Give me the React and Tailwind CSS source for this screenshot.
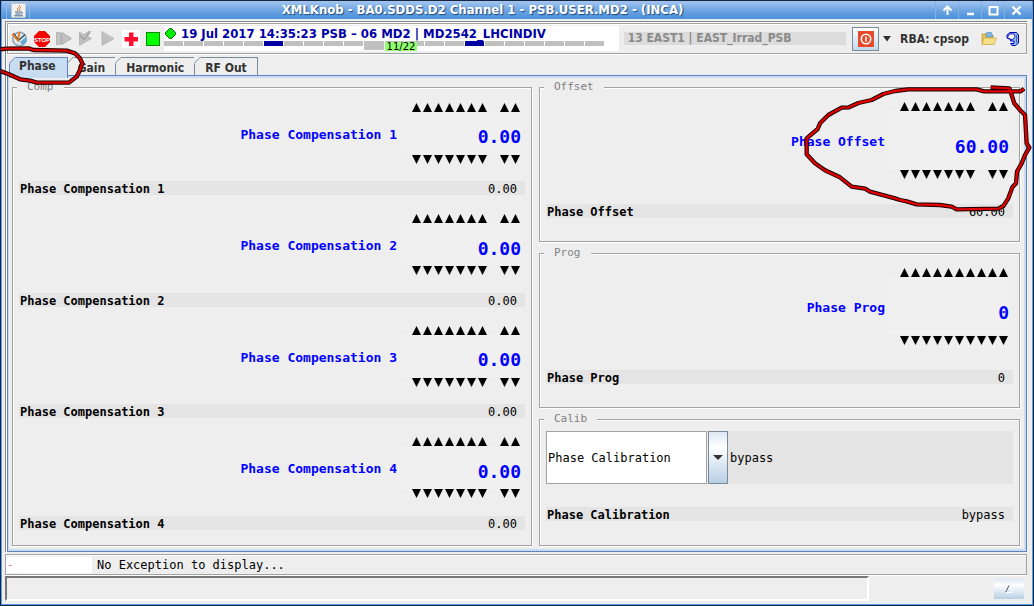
import React from "react";

const SANS = "font-['DejaVu_Sans_Condensed','DejaVu_Sans',sans-serif]";
const MONO = "font-['DejaVu_Sans_Mono',monospace]";

function Steps({ dir, decimals, label }) {
  const places = Array.from({ length: 10 }, (_, i) => i);
  return (
    <div className="grid h-[10px] grid-cols-[repeat(10,11px)] justify-end">
      {places.map((i) =>
        decimals && i === 7 ? (
          <span key={i} />
        ) : (
          <button key={i} type="button" aria-label={`${label} digit ${i + 1} ${dir}`} className="flex h-[10px] w-[11px] items-center justify-center">
            <svg width="9" height="9" viewBox="0 0 9 9">
              <path d={dir === "up" ? "M4.5 0L9 9H0z" : "M0 0H9L4.5 9z"} fill="#000" />
            </svg>
          </button>
        )
      )}
    </div>
  );
}

function Knob({ label, value, decimals = true, tall = false }) {
  return (
    <div className="flex items-center justify-end gap-[3px] pr-[4px]">
      <span className="pt-[3px] text-[13px] leading-4 font-bold text-[#0000ff]">{label}</span>
      <div className="w-[121px]">
        <Steps dir="up" decimals={decimals} label={label} />
        <div
          className={`flex items-center justify-end bg-[#f0f0f0] text-[18px] leading-5 font-bold text-[#0000ff] ${
            tall ? "h-[58px] pt-[14px]" : "h-[42px] pt-[8px]"
          }`}
        >
          {value}
        </div>
        <Steps dir="down" decimals={decimals} label={label} />
      </div>
    </div>
  );
}

function Readout({ label, value }) {
  return (
    <div className="flex h-[14px] items-center justify-between bg-[#e4e4e4] pt-[2px] pr-[8px] pl-px text-[12px] leading-[12px] text-black">
      <span className="font-bold">{label}</span>
      <span>{value}</span>
    </div>
  );
}

function Group({ title, className = "", children }) {
  return (
    <fieldset
      className={`flex min-w-0 flex-col border border-[#a3a3a3] px-[6px] shadow-[1px_1px_0_#fff,inset_1px_1px_0_#fff] ${className}`}
    >
      <legend className="ml-[-2px] h-[12px] bg-[#eeeeee] px-[10px] text-[11px] leading-[12px] text-[#808080]">{title}</legend>
      {children}
    </fieldset>
  );
}

function Tab({ children, selected }) {
  return (
    <button
      type="button"
      role="tab"
      aria-selected={!!selected}
      className={`relative -ml-px border border-b-0 text-[12px] leading-[17px] font-bold text-[#333] ${
        selected
          ? "z-10 h-[21px] border-[#6382bf] bg-[#c8ddf2] pr-[11px] pb-[3px] pl-[9px]"
          : "h-[18px] border-[#7a8a99] bg-[#eeeeee] px-[10px] pt-[2px]"
      }`}
    >
      <svg className="absolute -top-px -left-px" width="7" height="7" viewBox="0 0 7 7">
        <path d="M0 0H7L0 7z" fill="#eeeeee" />
        <path d="M0 6.5L6.5 0" stroke={selected ? "#6382bf" : "#7a8a99"} />
      </svg>
      {children}
    </button>
  );
}

function WinButton({ label, children }) {
  return (
    <button type="button" aria-label={label} className="flex h-[18px] w-[23px] items-center justify-center border-l border-[#7fb0e6]">
      <svg width="13" height="13" viewBox="0 0 13 13" fill="none">
        {children}
      </svg>
    </button>
  );
}

function Tool({ label, className, children }) {
  return (
    <button type="button" aria-label={label} className={`shrink-0 ${className}`}>
      {children}
    </button>
  );
}

function Toolbar() {
  const ticks = Array.from({ length: 22 }, (_, i) => i);
  return (
    <div className={`flex h-[31px] items-center border border-[#a3a3a3] pr-[7px] pl-[3px] shadow-[inset_1px_1px_0_#fff,0_1px_0_#fff] ${SANS}`}>
      <Tool label="Timing" className="mr-[6px]">
        <svg width="17" height="17" viewBox="0 0 17 17">
          <circle cx="8.500" cy="9" r="6.800" fill="#dcebf2" stroke="#93a2ae" strokeWidth="1.600" />
          <path d="M9 12l6-5 .5 4-4 4z" fill="#5fa8d4" />
          <path d="M7.500 10.500L14 4.500" stroke="#2a3f58" strokeWidth="1.200" />
          <path d="M1 4l6 6.500L8.500 2" stroke="#ea7a18" strokeWidth="1.800" fill="none" />
          <path d="M2.500 3l4.500 6" stroke="#333" strokeWidth="1" />
        </svg>
      </Tool>
      <Tool label="Stop" className="mr-[6px]">
        <svg width="16" height="16" viewBox="0 0 16 16">
          <path d="M5 0h6l5 5v6l-5 5H5l-5-5V5z" fill="#f50000" />
          <text x="8" y="10.500" textAnchor="middle" fontSize="6" fontWeight="bold" fill="#fff" fontFamily="Liberation Sans, sans-serif">STOP</text>
        </svg>
      </Tool>
      <Tool label="Fast forward" className="mr-[7px]">
        <svg width="16" height="15" viewBox="0 0 16 15">
          <path d="M.5 1.500H4l8 6-8 6H.5z" fill="#bcbcbc" stroke="#acacac" strokeWidth=".7" />
          <path d="M6 1.500L15.500 7.500 6 13.500z" fill="#c2c2c2" stroke="#a6a6a6" strokeWidth=".8" />
          <path d="M2.500 2v11" stroke="#d0d0d0" strokeWidth=".8" />
        </svg>
      </Tool>
      <Tool label="Step" className="mr-[9px]">
        <svg width="13" height="15" viewBox="0 0 13 15">
          <path d="M.5 1l4 2.500L9.500 .5H12L8.500 5.500 12.500 7.500.5 14.500z" fill="#c0c0c0" stroke="#aaaaaa" strokeWidth=".7" />
          <path d="M1 4.500l4 4 5-7" stroke="#9c9c9c" strokeWidth="1.200" fill="none" />
        </svg>
      </Tool>
      <Tool label="Play" className="mr-[7px]">
        <svg width="14" height="15" viewBox="0 0 14 15">
          <path d="M1 .5l12 7L1 14.500z" fill="#bfbfbf" stroke="#acacac" strokeWidth=".7" />
          <path d="M2 2l9 5.500" stroke="#d2d2d2" />
        </svg>
      </Tool>
      <Tool label="Add" className="mr-[6px] bg-white">
        <svg width="18" height="18" viewBox="0 0 18 18">
          <path d="M7 2.500h4.500V7H16v4.500h-4.500V16H7v-4.500H2.500V7H7z" fill="#ff1030" />
        </svg>
      </Tool>
      <Tool label="Status" className="mr-[4px]">
        <svg width="14" height="14" viewBox="0 0 14 14">
          <rect x=".5" y=".5" width="13" height="13" fill="#00ff00" stroke="#0a8a0a" />
        </svg>
      </Tool>
      <div className="mr-[5px] flex h-[25px] flex-[458] flex-col bg-white">
        <div className="flex h-[15px] items-center gap-[5px] pl-px text-[13px] leading-[15px] font-bold whitespace-nowrap text-[#0000a5]">
          <svg width="11" height="11" viewBox="0 0 11 11" className="shrink-0">
            <path d="M4.500 .5h2L10.500 4.500v2L6.500 10.500h-2L.5 6.500v-2z" fill="#00ee00" stroke="#0a6a0a" />
          </svg>
          <span>19 Jul 2017 14:35:23 PSB – 06 MD2 | MD2542_LHCINDIV</span>
        </div>
        <div className="relative flex w-[440px] gap-px">
          {ticks.map((i) => (
            <span
              key={i}
              className={`flex-1 ${i === 10 ? "h-[9px]" : "h-[5px]"} ${i === 5 || i === 15 ? "bg-[#0000a5]" : "bg-[#c0c0c0]"}`}
            />
          ))}
          <span className="absolute top-px left-[221px] w-[32px] bg-[#90ff70] text-center font-['DejaVu_Sans',sans-serif] text-[10px] leading-[9px] text-black">
            11/22
          </span>
        </div>
      </div>
      <div className="mr-[6px] flex h-[13px] flex-[220] items-center bg-[#dcdcdc] pl-[4px] text-[12px] leading-[13px] font-bold whitespace-nowrap text-[#8a8a8a]">
        13 EAST1 | EAST_Irrad_PSB
      </div>
      <Tool label="Login" className="mr-[4px] flex h-[24px] w-[27px] items-center justify-center border border-[#7a8a99] bg-linear-to-b from-white to-[#c3d8ec]">
        <svg width="16" height="16" viewBox="0 0 16 16">
          <rect width="16" height="16" fill="#e8492a" />
          <circle cx="8" cy="8" r="4.700" fill="none" stroke="#fff" strokeWidth="1.600" />
          <path d="M8 5.500v5" stroke="#fff" strokeWidth="1.600" />
        </svg>
      </Tool>
      <Tool label="Login options" className="mr-[9px]">
        <svg width="8" height="6" viewBox="0 0 8 6">
          <path d="M0 0h8L4 5.500z" fill="#333" />
        </svg>
      </Tool>
      <span className="mr-[12px] text-[12px] leading-4 font-bold whitespace-nowrap text-[#333]">RBA: cpsop</span>
      <Tool label="Open" className="mr-[9px]">
        <svg width="16" height="13" viewBox="0 0 16 13">
          <path d="M1 2h4l1 1h6v9H1z" fill="#e5c458" stroke="#c09a30" strokeWidth=".7" />
          <path d="M5 1l5-1 2 5H5z" fill="#7fb5e0" stroke="#4a88bb" strokeWidth=".6" />
          <path d="M3 6h12.500L13 12.500H1z" fill="#f7e08a" stroke="#c9a640" strokeWidth=".7" />
        </svg>
      </Tool>
      <Tool label="Help" className="">
        <svg width="13" height="14" viewBox="0 0 13 14">
          <path d="M4 .5h6.500l2 2.500v8l-3 2.500H6L4.500 11.500H8V9H4.500V7.500L1 6V3z" fill="#8dbcf2" stroke="#0000b0" />
          <path d="M3.500 2h4.500l1 2.500L7 7.500 4 7 1.500 5.500z" fill="#fff" stroke="#0000b0" strokeWidth=".8" />
          <path d="M10.500 3.500v8" stroke="#0000b0" strokeDasharray="1 1" />
        </svg>
      </Tool>
    </div>
  );
}

const OFFSET_MARK =
  "M632 22L688 25L695 45L703 70L720 90L735 105L740 190L748 203L735 225L725 250L711 275L708 310L697 322L685 355L670 378L655 386L530 388L515 380L480 375L410 373L380 364L360 360L345 355L270 335L255 326L215 320L180 292L135 271L105 250L80 223L80 175L113 147L120 130L145 105L185 83L207 82L235 69L275 60L310 42L345 33L385 28L590 28L612 34L722 34L732 26";
const TAB_MARK =
  "M0 148L20 146L85 145L100 150L200 152L225 160L240 175L247 190L240 210L230 230L207 248L110 248L90 242L60 238L25 222L0 213";

function Mark({ d, className, width, height }) {
  return (
    <svg
      className={`pointer-events-none absolute z-20 ${className}`}
      width={width}
      height={height}
      viewBox={`0 0 ${width * 3} ${height * 3}`}
      fill="none"
      strokeLinejoin="round"
    >
      <path d={d} stroke="#1a0000" strokeWidth="13" />
      <path d={d} stroke="#e00000" strokeWidth="7" />
    </svg>
  );
}

export default function App() {
  return (
    <div className="relative min-h-screen overflow-hidden border border-[#16253f]">
      <div className={`flex min-h-[calc(100vh-2px)] flex-col border border-t-0 border-[#5a9cec] bg-[#eeeeee] ${MONO}`}>
        <header className="flex h-[18px] shrink-0 items-center bg-linear-to-b from-[#a4c6f0] via-[#6fa6e2] to-[#4a8fd8]">
          <div className="flex h-[18px] w-[28px] items-center pl-[4px]">
            <span className="flex h-[18px] w-[24px] items-center justify-center border-x border-[#8cb8ea]">
              <svg width="15" height="15" viewBox="0 0 15 15">
                <rect x=".5" y=".5" width="14" height="14" rx="1" fill="#f1f1ef" stroke="#c9c9c4" />
                <path d="M8 2c2 2-3 3-1 6M10 4c-1 1-2 1.500-1 4" stroke="#e0762a" fill="none" />
                <path d="M4 9h6M4.500 11h5M3 12.800h9M10 9c2 0 1.500 2 0 2" stroke="#4a6f98" fill="none" />
              </svg>
            </span>
          </div>
          <h1 className={`flex-1 text-center text-[13px] leading-[18px] font-bold whitespace-nowrap text-white [text-shadow:1px_1px_1px_#1d4a80] ${SANS}`}>
            XMLKnob - BA0.SDDS.D2 Channel 1 - PSB.USER.MD2 - (INCA)
          </h1>
          <div className="flex w-[97px]">
            <WinButton label="Shade">
              <path d="M6.500 11V3M2.500 6.500l4-4 4 4" stroke="#fff" strokeWidth="2" />
            </WinButton>
            <WinButton label="Minimize">
              <path d="M3 10h7" stroke="#fff" strokeWidth="2.500" />
            </WinButton>
            <WinButton label="Maximize">
              <path d="M2.500 3h8v7.500h-8z" stroke="#fff" strokeWidth="2" />
            </WinButton>
            <WinButton label="Close">
              <path d="M2.500 2.500l8 8M10.500 2.500l-8 8" stroke="#fff" strokeWidth="2.200" />
            </WinButton>
          </div>
        </header>

        <main className="flex flex-1 flex-col pt-[2px] pr-[5px] pb-[3px] pl-[3px]">
          <div className="flex flex-1 flex-col border-t border-l border-[#7f8794] pt-px pl-px shadow-[inset_1px_1px_0_#fff]">
            <Toolbar />
            <div role="tablist" className={`mt-[3px] ml-[3px] flex h-[18px] items-start ${SANS}`}>
              <Tab selected>Phase</Tab>
              <Tab>Gain</Tab>
              <Tab>Harmonic</Tab>
              <Tab>RF Out</Tab>
            </div>
            <div
              role="tabpanel"
              className="flex flex-1 border border-[#6382bf]"
            >
              <div className="grid flex-1 grid-cols-[520fr_481fr] gap-[7px] border-2 border-l border-[#c8ddf2] p-[3px] pr-[4px]">
                <Group title="Comp" className="pb-[6px]">
                  {[1, 2, 3, 4].map((n) => (
                    <div key={n} className="flex flex-1 flex-col justify-center gap-[17px]">
                      <Knob label={`Phase Compensation ${n}`} value="0.00" />
                      <Readout label={`Phase Compensation ${n}`} value="0.00" />
                    </div>
                  ))}
                </Group>
                <div className="flex min-w-0 flex-col gap-[5px]">
                  <Group title="Offset" className="gap-[25px] pb-[23px]">
                    <div className="pt-[8px]">
                      <Knob label="Phase Offset" value="60.00" tall />
                    </div>
                    <Readout label="Phase Offset" value="60.00" />
                  </Group>
                  <Group title="Prog" className="gap-[25px] pb-[23px]">
                    <div className="pt-[8px]">
                      <Knob label="Phase Prog" value="0" decimals={false} tall />
                    </div>
                    <Readout label="Phase Prog" value="0" />
                  </Group>
                  <Group title="Calib" className="flex-1 gap-[23px]">
                    <div className="flex h-[59px] gap-px pt-[6px] text-[12px] text-black">
                      <input
                        aria-label="Calibration name"
                        defaultValue="Phase Calibration"
                        className="w-[161px] border border-[#a3a3a3] bg-white px-px outline-none"
                      />
                      <label className="relative flex flex-1">
                        <select aria-label="Phase Calibration mode" className="flex-1 appearance-none bg-[#e4e4e4] pl-[22px] outline-none">
                          <option>bypass</option>
                        </select>
                        <span className="pointer-events-none absolute inset-y-0 left-0 flex w-[20px] items-center justify-center border border-[#7a8a99] bg-linear-to-b from-[#dce8f4] via-white via-30% to-[#b8cfe5]">
                          <svg width="10" height="5" viewBox="0 0 10 5">
                            <path d="M0 0h10L5 5z" fill="#333" />
                          </svg>
                        </span>
                      </label>
                    </div>
                    <Readout label="Phase Calibration" value="bypass" />
                  </Group>
                </div>
              </div>
            </div>
          </div>

          <div className="mt-[2px] flex h-[21px] items-center border border-[#a3a3a3] pl-px text-[12px] text-black shadow-[inset_1px_1px_0_#fff,0_1px_0_#fff]">
            <span className="h-[16px] w-[85px] bg-white text-[11px] leading-[16px] text-[#f07060]">-</span>
            <span className="ml-[5px]">No Exception to display...</span>
          </div>
          <footer className="mt-px flex h-[25px] items-center">
            <input
              aria-label="Message"
              className="h-[25px] flex-1 border-2 border-t-[#777] border-r-white border-b-white border-l-[#777] bg-[#eeeeee] outline-none"
            />
            <div className="flex w-[158px] justify-end pr-[3px]">
              <button type="button" aria-label="Expand" className="flex h-[20px] w-[30px] items-center justify-center bg-linear-to-b from-[#dce8f4] via-white via-30% to-[#b8cfe5]">
                <svg width="8" height="8" viewBox="0 0 8 8" fill="none">
                  <path d="M.5 7.500L4 .5" stroke="#555" />
                  <path d="M4 .5l3.500 7h-7" stroke="#fff" />
                </svg>
              </button>
            </div>
          </footer>
        </main>
      </div>
      <Mark d={TAB_MARK} className="-top-px -left-px" width={100} height={100} />
      <Mark d={OFFSET_MARK} className="top-[79px] -right-px" width={254} height={170} />
    </div>
  );
}
